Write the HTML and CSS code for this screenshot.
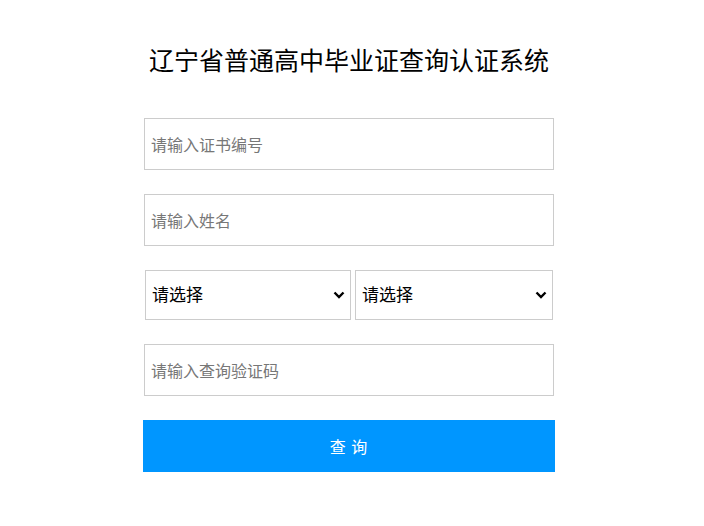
FILE: index.html
```html
<!DOCTYPE html>
<html lang="zh-CN">
<head>
  <meta charset="UTF-8">
  <meta name="viewport" content="width=device-width, initial-scale=1.0">
  <title>辽宁省普通高中毕业证查询认证系统</title>
  <link rel="stylesheet" href="styles.css">
</head>
<body>

  <!-- Query box -->
  <div class="query-box">
    <h1 class="query-title">辽宁省普通高中毕业证查询认证系统</h1>

    <form class="query-form" onsubmit="return false;">
      <input type="text" class="field" placeholder="请输入证书编号">
      <input type="text" class="field" placeholder="请输入姓名">

      <!-- Year / school selects -->
      <div class="select-row">
        <span class="pick-wrap pick-first">
          <select class="pick">
            <option>请选择</option>
          </select>
          <svg class="pick-arrow" width="12" height="8" viewBox="0 0 12 8"><path d="M1.5 1.5 L6 6 L10.5 1.5" fill="none" stroke="#000" stroke-width="2.4"/></svg>
        </span>
        <span class="pick-wrap pick-second">
          <select class="pick">
            <option>请选择</option>
          </select>
          <svg class="pick-arrow" width="12" height="8" viewBox="0 0 12 8"><path d="M1.5 1.5 L6 6 L10.5 1.5" fill="none" stroke="#000" stroke-width="2.4"/></svg>
        </span>
      </div>

      <input type="text" class="field" placeholder="请输入查询验证码">

      <button type="submit" class="query-btn">查 询</button>
    </form>
  </div>

</body>
</html>
```

FILE: styles.css
```css
body {
  font-family: "Noto Sans CJK SC", "Liberation Sans", sans-serif;
  background-color: #fff;
  color: #000;
  margin: 0;
  padding: 0;
}

.query-box {
  width: 412px;
  margin-left: 143px;
  padding-top: 44px;
}

.query-title {
  margin: 0;
  font-size: 25px;
  line-height: 30px;
  font-weight: normal;
  text-align: center;
}

/* Form */
.query-form {
  display: flex;
  flex-direction: column;
  gap: 24px;
  margin-top: 44px;
}

.field {
  box-sizing: border-box;
  width: 410px;
  height: 52px;
  margin-left: 1px;
  padding: 0 6px;
  border: 1px solid #ccc;
  border-radius: 0;
  outline: none;
  font-family: inherit;
  font-size: 16px;
  color: #333;
}

.field::placeholder {
  color: #777;
}

.select-row {
  display: flex;
  gap: 4px;
  margin-left: 2px;
}

.pick-wrap {
  position: relative;
  display: block;
}

.pick-first {
  width: 206px;
}

.pick-second {
  width: 198px;
}

.pick {
  -webkit-appearance: none;
  appearance: none;
  box-sizing: border-box;
  width: 100%;
  height: 50px;
  padding: 0 20px 3px 6px;
  border: 1px solid #ccc;
  border-radius: 0;
  background: #fff;
  font-family: inherit;
  font-size: 17px;
  color: #000;
  outline: none;
}

.pick-arrow {
  position: absolute;
  right: 6px;
  top: 21px;
  pointer-events: none;
}

.query-btn {
  height: 52px;
  width: 412px;
  border: none;
  background: #0096ff;
  color: #fff;
  font-family: inherit;
  font-size: 16px;
  letter-spacing: 1px;
  cursor: pointer;
}
```
